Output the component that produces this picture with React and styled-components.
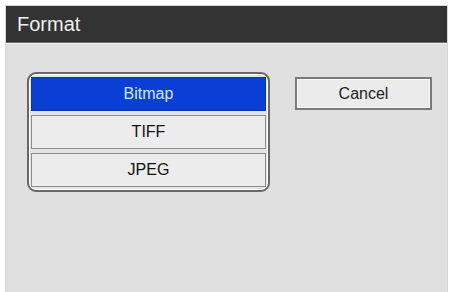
import React, { useState } from "react";
import styled, { createGlobalStyle } from "styled-components";

const Global = createGlobalStyle`
  html, body { margin: 0; padding: 0; background: #ffffff; }
  body { font-family: "Liberation Sans", Arial, sans-serif; }
`;

const Page = styled.div`
  padding: 5px 2px 0 5px;
  height: 292px;
  box-sizing: border-box;
`;

const Dialog = styled.div`
  height: 287px;
  border: 1px solid #d6d6d6;
  border-bottom: none;
  display: flex;
  flex-direction: column;
  background: #e0e0e0;
`;

const TitleBar = styled.div`
  height: 37px;
  background: #333333;
  border-bottom: 1px solid #6a6a6a;
  display: flex;
  align-items: center;
  padding-left: 11px;
  color: #f0f0f0;
  font-size: 20px;
  box-sizing: border-box;
`;

const Body = styled.div`
  flex: 1;
  display: flex;
  align-items: flex-start;
  gap: 25px;
  padding: 28px 0 0 21px;
  border-top: 1px solid #f2f2f2;
`;

const ListFrame = styled.div`
  width: 243px;
  box-sizing: border-box;
  border: 2px solid #686868;
  border-radius: 9px;
  box-shadow: inset 0 0 0 1px #ffffff;
  padding: 3px 2px;
  display: flex;
  flex-direction: column;
  gap: 4px;
  background: #e4e4e4;
`;

const Row = styled.div`
  height: 34px;
  box-sizing: border-box;
  display: flex;
  align-items: center;
  justify-content: center;
  font-size: 16px;
  border: 1px solid ${(p) => (p.$selected ? "#0a35b8" : "#8c8c8c")};
  background: ${(p) => (p.$selected ? "#0a3ed4" : "#ececec")};
  color: ${(p) => (p.$selected ? "#d6e6ff" : "#111111")};
  cursor: pointer;
`;

const Button = styled.button`
  width: 137px;
  height: 33px;
  margin-top: 5px;
  box-sizing: border-box;
  border: 2px solid #7a7a7a;
  background: #ebebeb;
  font-family: "Liberation Sans", Arial, sans-serif;
  font-size: 16px;
  color: #222222;
  box-shadow: inset 0 0 0 1px #f8f8f8;
  padding: 0;
`;

export default function App() {
  const [sel, setSel] = useState("Bitmap");
  const items = ["Bitmap", "TIFF", "JPEG"];
  return (
    <>
      <Global />
      <Page>
        <Dialog>
          <TitleBar>Format</TitleBar>
          <Body>
            <ListFrame>
              {items.map((it) => (
                <Row key={it} $selected={sel === it} onClick={() => setSel(it)}>
                  {it}
                </Row>
              ))}
            </ListFrame>
            <Button>Cancel</Button>
          </Body>
        </Dialog>
      </Page>
    </>
  );
}
